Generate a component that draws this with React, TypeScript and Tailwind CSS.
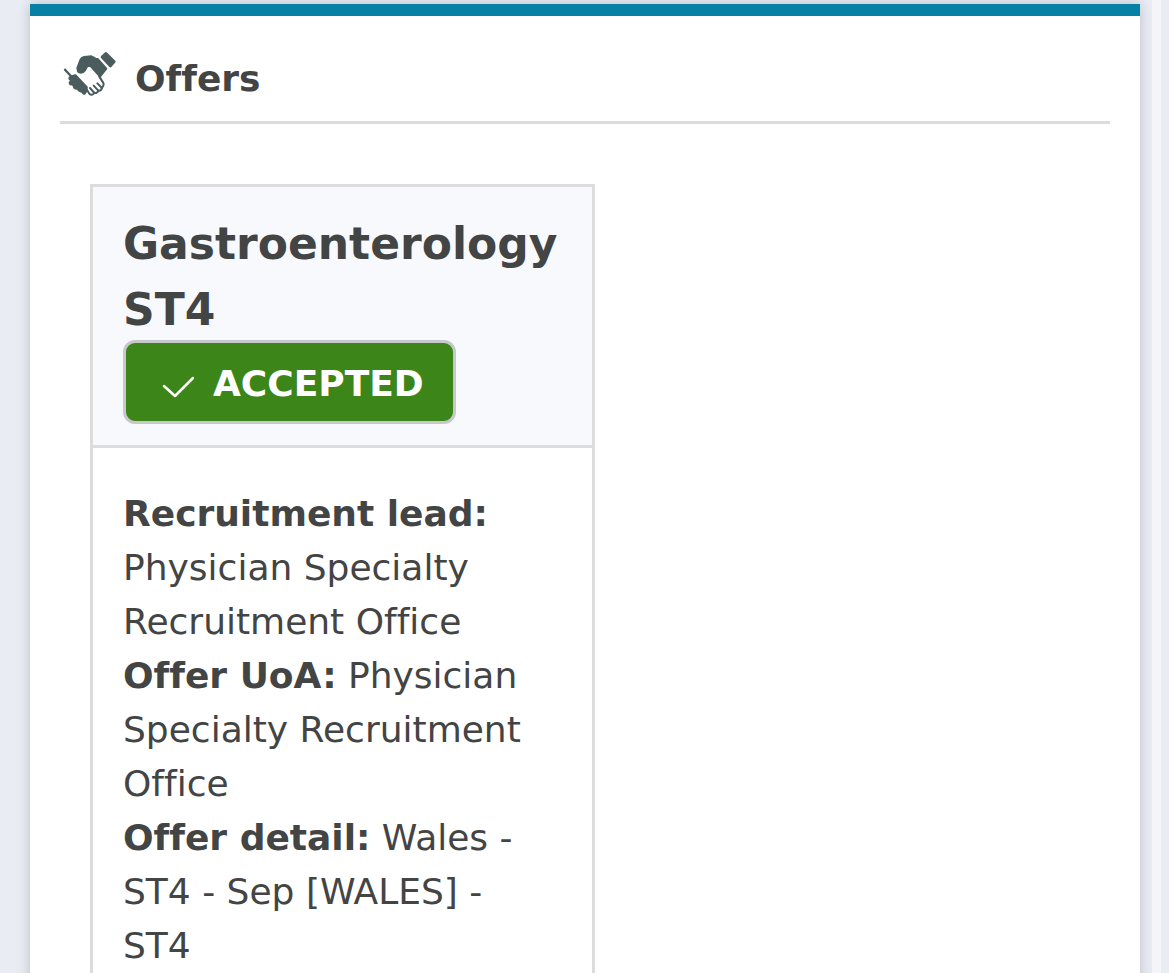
interface OfferField {
  label: string;
  value: string;
}

const fields: OfferField[] = [
  { label: 'Recruitment lead:', value: 'Physician Specialty Recruitment Office' },
  { label: 'Offer UoA:', value: 'Physician Specialty Recruitment Office' },
  { label: 'Offer detail:', value: 'Wales - ST4 - Sep [WALES] - ST4' },
];

function HandshakeIcon() {
  return (
    <svg viewBox="0 0 180 165" className="h-[55px] w-[60px] shrink-0" aria-hidden="true">
      <g fill="#4b5c5e" stroke="#4b5c5e" strokeLinecap="round" strokeLinejoin="round">
        <path d="M126 33 L138 22 L163 47 L151 60 Z" strokeWidth="8" />
        <path
          d="M54 76 L52 66 L61 42 Q64 35 72 33 L94 31 Q102 34 108 39 L113 39 L139 68 L120 92 L92 60 L82 60 L75 73 Q67 83 58 79 Z"
          strokeWidth="6"
        />
        <path d="M15 71 L36 94" fill="none" strokeWidth="7" />
        <path d="M34 92 L46 88 L80 124 L76 138 L63 136 L46 124 L33 110 Z" strokeWidth="7" />
        <path d="M32 97 L42 96 M33 111 L42 108 M46 123 L53 116 M60 131 L65 124 M72 139 L75 132" fill="none" strokeWidth="14" />
      </g>
      <g fill="none" stroke="#4b5c5e" strokeLinecap="round" strokeLinejoin="round" strokeWidth="6">
        <path d="M80 130 L88 143 Q96 150 103 141 L90 126" />
        <path d="M102 140 Q111 144 115 134 L101 119" />
        <path d="M114 134 Q123 136 126 126 L112 112" />
        <path d="M125 126 Q134 118 129 109 L118 92" />
      </g>
    </svg>
  );
}

function CheckIcon() {
  return (
    <svg viewBox="0 0 32 24" className="mt-1 h-6 w-8 shrink-0" aria-hidden="true">
      <path
        d="M2 12 L13 22 L31 4"
        fill="none"
        stroke="#fff"
        strokeWidth="2.5"
        strokeLinecap="round"
        strokeLinejoin="round"
      />
    </svg>
  );
}

function OfferCard() {
  return (
    <article className="w-[51%] border-[3px] border-[#dcdcdd]">
      <header className="border-b-[3px] border-[#dcdcdd] bg-[#f8f9fd] px-[30px] pt-6 pb-[21px]">
        <h3 className="text-[44px] leading-[66px] font-bold">Gastroenterology ST4</h3>
        <div className="mt-[-3px] inline-flex h-[84px] items-center gap-[19px] rounded-xl border-[3px] border-[#c6c8c9] bg-[#3b8519] pt-1 pr-[29px] pl-9 text-[36px] font-bold text-white">
          <CheckIcon />
          <span>ACCEPTED</span>
        </div>
      </header>
      <div className="px-[30px] pt-[39px] pb-10">
        {fields.map((field) => (
          <p key={field.label} className="pr-6">
            <strong>{field.label}</strong> {field.value}
          </p>
        ))}
      </div>
    </article>
  );
}

export default function App() {
  return (
    <div className="flex h-screen overflow-hidden bg-[#e9edf3] font-['Verdana','DejaVu_Sans',sans-serif] text-[36px] leading-[54px] text-[#434444] [font-variant-ligatures:none]">
      <main className="mt-1 ml-[30px] min-w-0 flex-1">
        <section className="min-h-screen border-t-12 border-[#0681a5] bg-white px-[30px] shadow-[0_0_12px_rgba(0,0,0,0.2)]">
          <div className="flex h-[108px] items-center border-b-[3px] border-[#dcdcdd] pt-5">
            <div className="-mt-2.5">
              <HandshakeIcon />
            </div>
            <h2 className="ml-[15px] font-bold">Offers</h2>
          </div>
          <div className="px-[30px] pt-[60px]">
            <OfferCard />
          </div>
        </section>
      </main>
      <div className="ml-3 w-[9px] bg-[#f3f5f9]" />
      <div className="w-2 bg-[#e9edf3]" />
    </div>
  );
}
